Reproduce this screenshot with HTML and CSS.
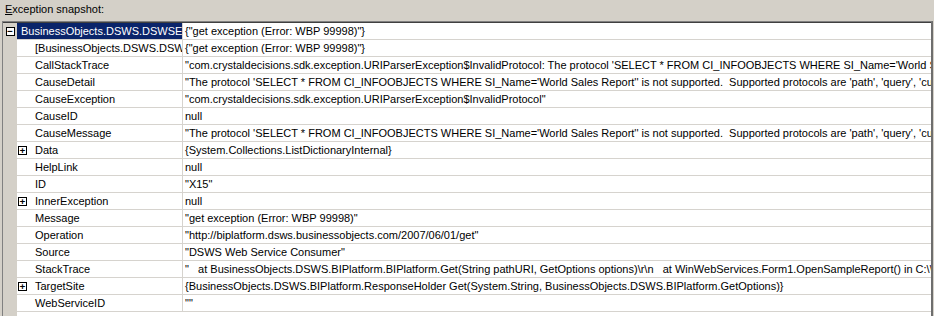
FILE: index.html
```html
<!DOCTYPE html>
<html>
<head>
<meta charset="utf-8">
<link rel="stylesheet" href="styles.css">
</head>
<body>
<div class="header"><span class="ul">E</span>xception snapshot:</div>
<div class="panel">
  <div class="row">
    <div class="gutter"><span class="box">&#8722;</span></div>
    <div class="name sel top">BusinessObjects.DSWS.DSWSException</div>
    <div class="value">{"get exception (Error: WBP 99998)"}</div>
  </div>
  <div class="row">
    <div class="gutter"></div>
    <div class="name">[BusinessObjects.DSWS.DSWSException]</div>
    <div class="value">{"get exception (Error: WBP 99998)"}</div>
  </div>
  <div class="row">
    <div class="gutter"></div>
    <div class="name">CallStackTrace</div>
    <div class="value">"com.crystaldecisions.sdk.exception.URIParserException$InvalidProtocol: The protocol 'SELECT * FROM CI_INFOOBJECTS WHERE SI_Name='World Sales Report'' is not supported."</div>
  </div>
  <div class="row">
    <div class="gutter"></div>
    <div class="name">CauseDetail</div>
    <div class="value">"The protocol 'SELECT * FROM CI_INFOOBJECTS WHERE SI_Name='World Sales Report'' is not supported.&nbsp; Supported protocols are 'path', 'query', 'cuid', and 'search'."</div>
  </div>
  <div class="row">
    <div class="gutter"></div>
    <div class="name">CauseException</div>
    <div class="value">"com.crystaldecisions.sdk.exception.URIParserException$InvalidProtocol"</div>
  </div>
  <div class="row">
    <div class="gutter"></div>
    <div class="name">CauseID</div>
    <div class="value">null</div>
  </div>
  <div class="row">
    <div class="gutter"></div>
    <div class="name">CauseMessage</div>
    <div class="value">"The protocol 'SELECT * FROM CI_INFOOBJECTS WHERE SI_Name='World Sales Report'' is not supported.&nbsp; Supported protocols are 'path', 'query', 'cuid', and 'search'."</div>
  </div>
  <div class="row">
    <div class="gutter"></div>
    <div class="name"><span class="box plus">+</span>Data</div>
    <div class="value">{System.Collections.ListDictionaryInternal}</div>
  </div>
  <div class="row">
    <div class="gutter"></div>
    <div class="name">HelpLink</div>
    <div class="value">null</div>
  </div>
  <div class="row">
    <div class="gutter"></div>
    <div class="name">ID</div>
    <div class="value">"X15"</div>
  </div>
  <div class="row">
    <div class="gutter"></div>
    <div class="name"><span class="box plus">+</span>InnerException</div>
    <div class="value">null</div>
  </div>
  <div class="row">
    <div class="gutter"></div>
    <div class="name">Message</div>
    <div class="value">"get exception (Error: WBP 99998)"</div>
  </div>
  <div class="row">
    <div class="gutter"></div>
    <div class="name">Operation</div>
    <div class="value">"http://biplatform.dsws.businessobjects.com/2007/06/01/get"</div>
  </div>
  <div class="row">
    <div class="gutter"></div>
    <div class="name">Source</div>
    <div class="value">"DSWS Web Service Consumer"</div>
  </div>
  <div class="row">
    <div class="gutter"></div>
    <div class="name">StackTrace</div>
    <div class="value pre">"   at BusinessObjects.DSWS.BIPlatform.BIPlatform.Get(String pathURI, GetOptions options)\r\n   at WinWebServices.Form1.OpenSampleReport() in C:\\SampleApp\\Form1.cs:line 42"</div>
  </div>
  <div class="row">
    <div class="gutter"></div>
    <div class="name"><span class="box plus">+</span>TargetSite</div>
    <div class="value">{BusinessObjects.DSWS.BIPlatform.ResponseHolder Get(System.String, BusinessObjects.DSWS.BIPlatform.GetOptions)}</div>
  </div>
  <div class="row">
    <div class="gutter"></div>
    <div class="name">WebServiceID</div>
    <div class="value">""</div>
  </div>
</div>
</body>
</html>
```
FILE: styles.css
```css
html, body {
  margin: 0;
  padding: 0;
  background: #d4d0c8;
  overflow: hidden;
  height: 316px;
}
body {
  font-family: Tahoma, "Liberation Sans", "DejaVu Sans", sans-serif;
  font-size: 11px;
  color: #000;
}
.header {
  height: 21px;
  box-sizing: border-box;
  padding: 3px 0 0 5px;
  line-height: 13px;
}
.ul { text-decoration: underline; }
.panel {
  margin-left: 2px;
  width: 931px;
  height: 320px;
  box-sizing: border-box;
  border-top: 1px solid #808080;
  border-left: 1px solid #808080;
  border-right: 2px solid #6e6e6e;
  box-shadow: inset 0 1px 0 #404040;
  padding-top: 1px;
  background: linear-gradient(to right, #d4d0c8 14px, #fff 14px);
}
.row {
  display: flex;
  height: 17px;
}
.gutter {
  width: 14px;
  flex: none;
  display: flex;
  align-items: center;
  justify-content: center;
}
.name, .value {
  height: 16px;
  line-height: 16px;
  border-bottom: 1px solid #d6d3ce;
  white-space: nowrap;
  overflow: hidden;
  display: flex;
  align-items: center;
}
.name {
  width: 165px;
  flex: none;
  box-sizing: content-box;
  padding-left: 18px;
  width: 147px;
  border-right: 1px solid #d6d3ce;
}
.name.top {
  padding-left: 4px;
  width: 161px;
}
.sel {
  background: #0a246a;
  color: #fff;
}
.value {
  flex: 1;
  padding-left: 2px;
  min-width: 0;
}
.pre { white-space: pre; }
.box {
  display: inline-flex;
  align-items: center;
  justify-content: center;
  width: 7px;
  height: 7px;
  border: 1px solid #000;
  background: #fff;
  font-family: "DejaVu Sans Mono", monospace;
  font-size: 9px;
  line-height: 7px;
  color: #000;
  font-weight: bold;
}
.plus {
  margin-left: -17px;
  margin-right: 8px;
}
```
